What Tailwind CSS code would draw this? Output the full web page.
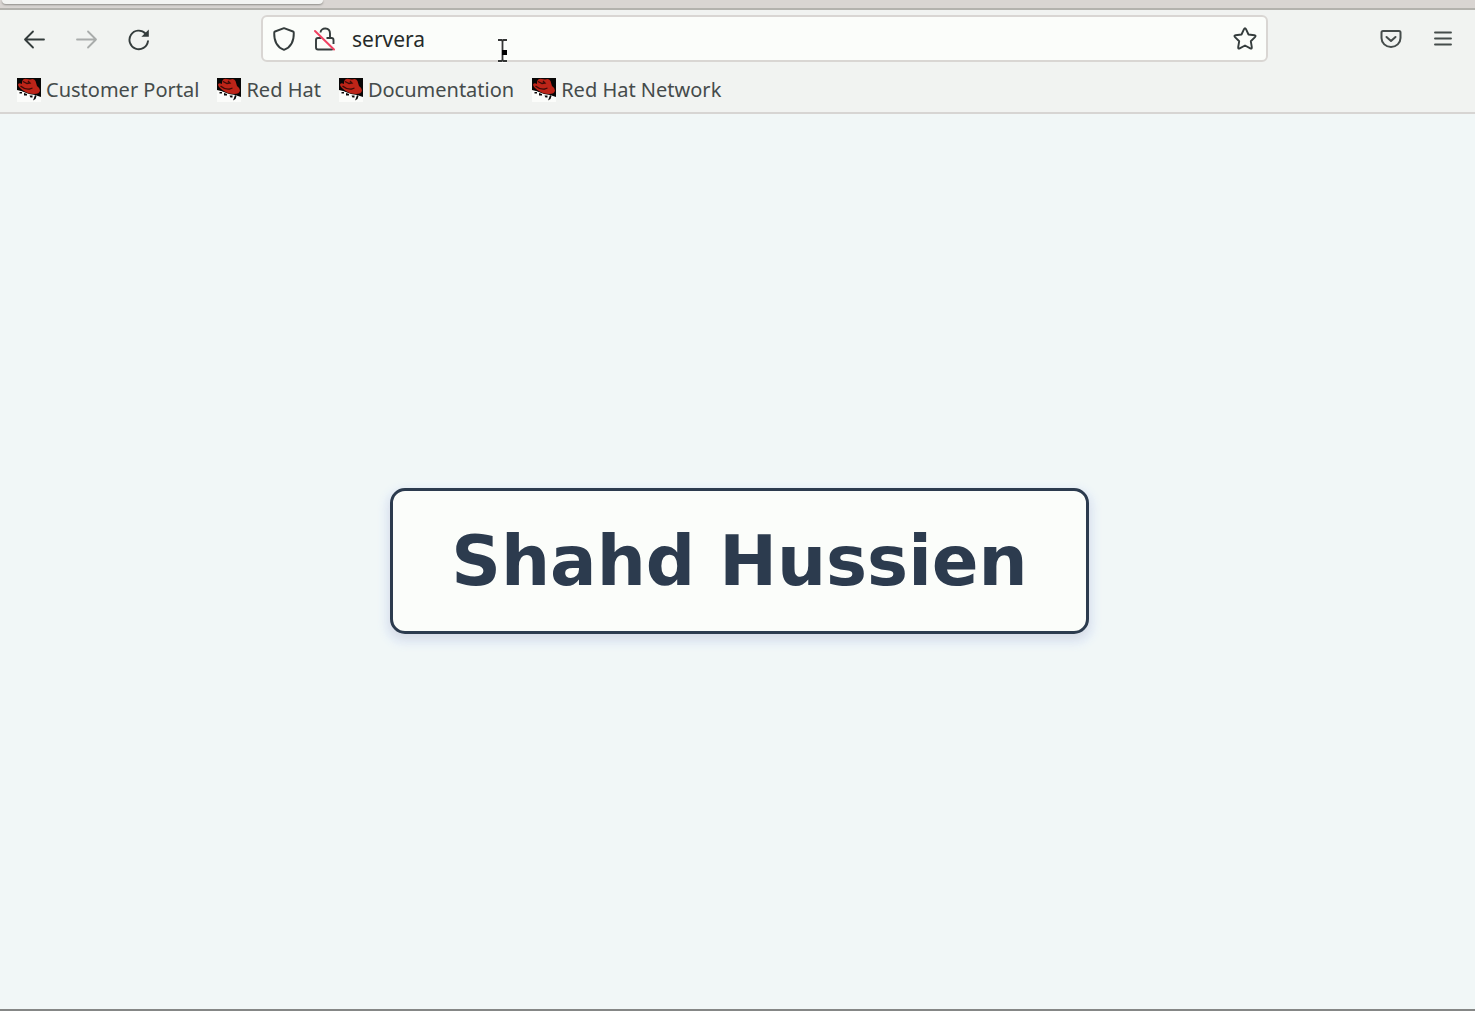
<!DOCTYPE html>
<html lang="en">
<head>
<meta charset="utf-8">
<meta name="viewport" content="width=device-width, initial-scale=1">
<title>servera</title>
<script src="https://cdn.jsdelivr.net/npm/@tailwindcss/browser@4"></script>
</head>
<body class="relative flex h-screen flex-col overflow-hidden bg-[#f1f7f7] font-['Noto_Sans',sans-serif] text-[#454b4b]">
  <svg class="hidden" aria-hidden="true">
    <symbol id="hat" viewBox="0 0 24 24">
      <path fill="#fbfcfa" d="M0 0h24v24H0z"/>
      <path fill="#080606" d="M0 0h24v19l-3-1-3-1-6-1-8-3-4-1z"/>
      <path fill="#bd2418" d="M5 4Q6 0 10 1l3 .5Q17 0 18.500 3L20 8q3 2 3 4.500-.5 3.500-6 3.500-6 0-11-3.500Q1 9 1 6.500 2 4.500 5 6z"/>
      <path fill="none" stroke="#3d0c09" stroke-width="1.300" d="M6 3.500l4 2 3-.5-2-2M3.500 8q4 3.500 9 3l3-1"/>
      <path fill="#fbfcfa" d="M0 13.500l3-.5 4 1.500 3 2.500 4 1 4 1 3-.5v5.500H0z"/>
      <path fill="#080606" d="M2.500 14h2.500v1.500H2.500zM7 15l3 1v1.500H7zM12.500 17.500h3v2h-2zM18 17l1.500 1-1 3-2.500 1.500 1-2.500z"/>
    </symbol>
  </svg>

  <header class="shrink-0 border-b-2 border-[#d7d5d3] bg-[#f1f3f1]">
    <div class="h-[10px] border-b-2 border-[#b3b2ad] bg-[#d9d5d2]">
      <div class="ml-[2px] h-[4px] w-[321px] rounded-b-sm bg-[#f3f4f2] shadow-[0_1px_2px_#8f8d8a]"></div>
    </div>

    <nav aria-label="Navigation" class="flex h-[57px] items-center pr-5 pl-[22px]">
      <div class="flex w-[239px] shrink-0 gap-[28px]">
        <button type="button" aria-label="Back" class="size-6"><svg viewBox="0 0 24 24" class="size-6" fill="none" stroke="#343c3c" stroke-width="1.8" stroke-linecap="round" stroke-linejoin="round"><path d="M22 12.500H3M11 4.500L3 12.500l8 8"/></svg></button>
        <button type="button" aria-label="Forward" disabled class="size-6"><svg viewBox="0 0 24 24" class="size-6" fill="none" stroke="#a9acab" stroke-width="1.8" stroke-linecap="round" stroke-linejoin="round"><path d="M3 12.500h19M14 4.500l8 8-8 8"/></svg></button>
        <button type="button" aria-label="Reload" class="size-6"><svg viewBox="0 0 24 24" class="size-6" fill="none" stroke="#343c3c" stroke-width="1.9" stroke-linecap="round"><path d="M19.500 6.500A9.300 9.300 0 1 0 22 14.200"/><path fill="#343c3c" stroke="none" d="M22.800 2.500v7.200h-7.400z"/></svg></button>
      </div>
      <div class="flex h-[47px] grow items-center rounded-[6px] border-2 border-[#d9d6d3] bg-[#fbfdfa] pr-[9px] pl-[9px]">
        <button type="button" aria-label="Tracking protection" class="size-6"><svg viewBox="0 0 24 24" class="size-6" fill="none" stroke="#343c3c" stroke-width="1.9" stroke-linejoin="round"><path d="M12 1.200l9 3.300q.8.300.8 1.200C22 13 19.500 20 12 22.800 4.500 20 2 13 2.200 5.700q0-.9.800-1.200z"/></svg></button>
        <button type="button" aria-label="Connection not secure" class="ml-4 size-6"><svg viewBox="0 0 24 24" class="size-6" fill="none"><path stroke="#343c3c" stroke-width="1.900" stroke-linejoin="round" d="M8.500 5.500C9 0 18 0 18 6.500v4.500h1.500q2 0 2 2v4M14.500 11H18M9.500 11H6q-2 0-2 2v7.500q0 2 2 2h13.500q1 0 1.500-.5"/><path stroke="#f04262" stroke-width="2" stroke-linecap="round" d="M3 4l19 18.500"/></svg></button>
        <input type="text" aria-label="Address" value="servera" class="ml-4 min-w-0 grow bg-transparent text-[21px] leading-7 text-[#252a29] outline-none">
        <button type="button" aria-label="Bookmark this page" class="size-6"><svg viewBox="0 0 24 24" class="size-6" fill="none" stroke="#343c3c" stroke-width="1.900" stroke-linejoin="round"><path d="M11 2.200q1-2 2 0l2.500 5.300 5.900.8q2 .3.600 1.800l-4.200 4.100 1 5.900q.3 2-1.500 1.200L12 18.500l-5.300 2.800q-1.800.8-1.500-1.200l1-5.900L2 10.100Q.6 8.600 2.600 8.300l5.900-.8z"/></svg></button>
      </div>
      <div class="flex w-[187px] shrink-0 justify-end gap-[28px]">
        <button type="button" aria-label="Save to Pocket" class="size-6"><svg viewBox="0 0 24 24" class="size-6" fill="none" stroke="#454c4b" stroke-width="2" stroke-linecap="round" stroke-linejoin="round"><path d="M4 4h16q1.500 0 1.500 1.500v5.500a9.500 9 0 0 1-19 0V5.500q0-1.500 1.500-1.500z"/><path d="M7.500 10l4.500 4L16.500 10"/></svg></button>
        <button type="button" aria-label="Open application menu" class="size-6"><svg viewBox="0 0 24 24" class="size-6" fill="none" stroke="#454c4b" stroke-width="1.900" stroke-linecap="round"><path d="M4 5.500h16M4 11.500h16M4 17.500h16"/></svg></button>
      </div>
    </nav>

    <nav aria-label="Bookmarks" class="flex h-[45px] items-center gap-[18px] pl-[17px] text-[20px] leading-7 whitespace-nowrap">
      <a href="#" class="flex items-center gap-[5px]"><svg class="size-6" aria-hidden="true"><use href="#hat"/></svg>Customer Portal</a>
      <a href="#" class="flex items-center gap-[5px]"><svg class="size-6" aria-hidden="true"><use href="#hat"/></svg>Red Hat</a>
      <a href="#" class="flex items-center gap-[5px]"><svg class="size-6" aria-hidden="true"><use href="#hat"/></svg>Documentation</a>
      <a href="#" class="flex items-center gap-[5px]"><svg class="size-6" aria-hidden="true"><use href="#hat"/></svg>Red Hat Network</a>
    </nav>
  </header>

  <main class="flex grow items-center justify-center border-b-2 border-[#858786] pb-px pl-1">
    <h1 class="rounded-[15px] border-3 border-[#2c3b4e] bg-[#fbfdfa] px-[58px] py-[30px] font-['DejaVu_Sans',sans-serif] text-[69px] leading-[80px] font-bold whitespace-nowrap text-[#2c3b4e] shadow-[0_5px_8px_rgba(70,60,100,0.12),0_5px_6px_8px_#e9f1f8]">Shahd Hussien</h1>
  </main>

  <svg class="pointer-events-none absolute top-[38px] left-[496px] h-[26px] w-[14px]" viewBox="0 0 14 26" fill="none" aria-hidden="true">
    <path stroke="#fff" stroke-width="4" d="M2 2h9M2 23h9M6.500 2v21"/>
    <path stroke="#343635" stroke-width="1.800" d="M2 2h3.500l1 1 1-1H11M2 23h3.500l1-1 1 1H11M6.500 3v19"/>
    <path fill="#000" d="M6 12h5v5H6z"/>
  </svg>
</body>
</html>
